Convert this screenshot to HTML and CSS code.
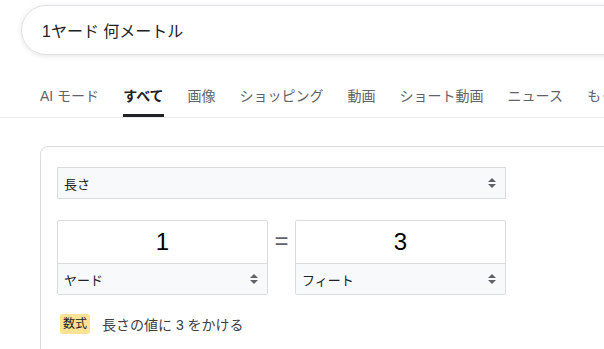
FILE: index.html
```html
<!DOCTYPE html>
<html lang="ja">
<head>
    <meta charset="UTF-8">
    <meta name="viewport" content="width=device-width, initial-scale=1.0">
    <title>1ヤード 何メートル</title>
    <link rel="stylesheet" href="styles.css">
</head>
<body>

    <div class="search-bar">
        <div class="search-box">1ヤード 何メートル</div>
    </div>

    <div class="tabs">
        <span class="tab">AI モード</span>
        <span class="tab active">すべて</span>
        <span class="tab">画像</span>
        <span class="tab">ショッピング</span>
        <span class="tab">動画</span>
        <span class="tab">ショート動画</span>
        <span class="tab">ニュース</span>
        <span class="tab">もっと見る</span>
    </div>

    <div class="card">
        <div class="select wide">
            <span>長さ</span>
            <svg class="arrows" width="10" height="12" viewBox="0 0 10 12"><path d="M5 1L9 5H1z M5 11L1 7H9z" fill="#5f6368"/></svg>
        </div>

        <div class="converter">
            <div class="unit-box">
                <div class="value">1</div>
                <div class="select">
                    <span>ヤード</span>
                    <svg class="arrows" width="10" height="12" viewBox="0 0 10 12"><path d="M5 1L9 5H1z M5 11L1 7H9z" fill="#5f6368"/></svg>
                </div>
            </div>
            <div class="equals">=</div>
            <div class="unit-box">
                <div class="value">3</div>
                <div class="select">
                    <span>フィート</span>
                    <svg class="arrows" width="10" height="12" viewBox="0 0 10 12"><path d="M5 1L9 5H1z M5 11L1 7H9z" fill="#5f6368"/></svg>
                </div>
            </div>
        </div>

        <div class="formula">
            <span class="badge">数式</span>
            <span>長さの値に 3 をかける</span>
        </div>
    </div>

</body>
</html>
```

FILE: styles.css
```css
body {
    font-family: "Liberation Sans", Arial, "Noto Sans CJK JP", sans-serif;
    background-color: #fff;
    color: #202124;
    margin: 0;
    overflow: hidden;
}
.search-bar {
    padding: 5px 0 0 21px;
}
.search-box {
    width: 680px;
    height: 48px;
    border: 1px solid #dfe1e5;
    border-radius: 25px;
    box-shadow: 0 1px 5px rgba(32,33,36,0.12);
    padding-left: 20px;
    display: flex;
    align-items: center;
    font-size: 16px;
}
.tabs {
    display: flex;
    gap: 24px;
    margin-top: 15px;
    padding-left: 40px;
    border-bottom: 1px solid #e8eaed;
    white-space: nowrap;
}
.tab {
    font-size: 14px;
    line-height: 20px;
    color: #5f6368;
    padding: 16px 0 8px;
    border-bottom: 3px solid transparent;
}
.tab.active {
    color: #202124;
    font-weight: bold;
    border-bottom-color: #202124;
}
.card {
    margin: 28px 0 0 40px;
    width: 640px;
    height: 240px;
    border: 1px solid #dadce0;
    border-radius: 8px;
    padding: 20px 0 0 16px;
}
.select {
    display: flex;
    align-items: center;
    justify-content: space-between;
    height: 30px;
    padding: 0 8px 0 6px;
    background-color: #f8f9fa;
    font-size: 13px;
}
.select.wide {
    width: 433px;
    border: 1px solid #dadce0;
}
.arrows {
    display: block;
}
.converter {
    display: flex;
    align-items: flex-start;
    margin-top: 21px;
}
.unit-box {
    width: 209px;
    border: 1px solid #dadce0;
    border-radius: 2px;
}
.value {
    height: 42px;
    line-height: 42px;
    text-align: center;
    font-size: 24px;
    color: #000;
    border-bottom: 1px solid #dadce0;
}
.equals {
    width: 27px;
    text-align: center;
    font-size: 24px;
    line-height: 42px;
    color: #5f6368;
}
.formula {
    display: flex;
    align-items: center;
    gap: 12px;
    margin: 19px 0 0 3px;
    font-size: 14px;
    color: #3c4043;
}
.badge {
    background-color: #fde293;
    border-radius: 3px;
    font-size: 12px;
    line-height: 20px;
    padding: 0 3px;
    color: #202124;
}
```
